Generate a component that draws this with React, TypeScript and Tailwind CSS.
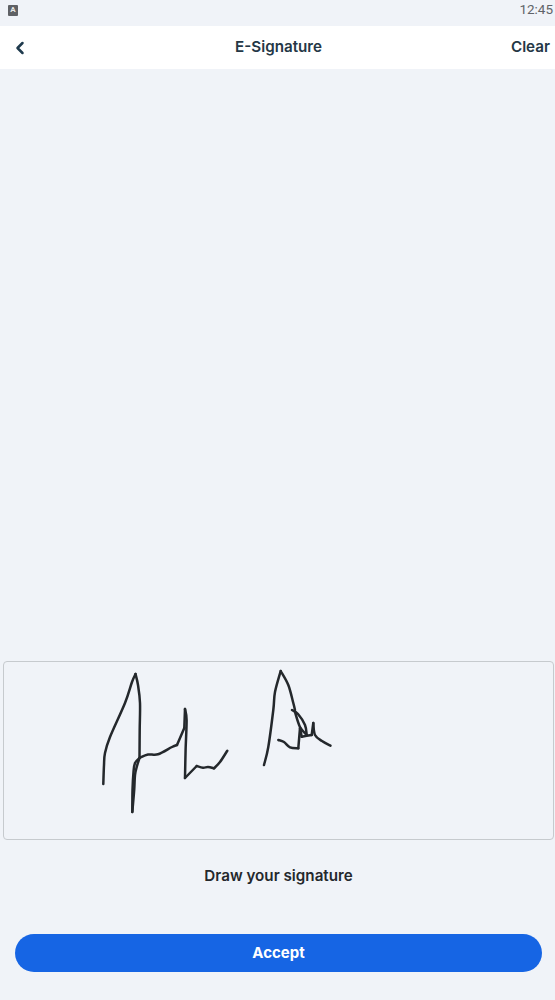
import { ChevronLeft } from 'lucide-react';

type Pt = [number, number];

// smooth line through the sampled pen points
function smooth(pts: Pt[]) {
  let d = `M${pts[0][0]} ${pts[0][1]}`;
  for (let i = 0; i < pts.length - 1; i++) {
    const p0 = pts[Math.max(i - 1, 0)];
    const p1 = pts[i];
    const p2 = pts[i + 1];
    const p3 = pts[Math.min(i + 2, pts.length - 1)];
    const c1x = p1[0] + (p2[0] - p0[0]) / 6;
    const c1y = p1[1] + (p2[1] - p0[1]) / 6;
    const c2x = p2[0] - (p3[0] - p1[0]) / 6;
    const c2y = p2[1] - (p3[1] - p1[1]) / 6;
    d += ` C${c1x} ${c1y} ${c2x} ${c2y} ${p2[0]} ${p2[1]}`;
  }
  return d;
}

// split at the sharp corners so the curve doesn't overshoot there
const strokes: Pt[][] = [
  [[103.3, 784], [104, 765], [105, 753], [110, 737], [125, 703], [132, 682], [135.5, 674]],
  [[135.5, 674], [138, 685], [140, 703], [139.7, 730], [139.5, 758]],
  [[139.5, 758], [135, 763], [133.5, 772], [132.5, 790], [132.3, 812]],
  [[132.3, 812], [134.2, 790], [135, 775], [137, 766], [139.5, 758]],
  [[139.5, 758], [148, 754.5], [158, 754.3], [172, 747], [177, 745]],
  [[177, 745], [184.3, 728]],
  [[184.3, 728], [185, 709]],
  [[185, 709], [186.6, 720], [185.6, 750], [185, 778]],
  [[185, 778], [196.7, 766]],
  [[196.7, 766], [203, 767.7], [208, 767], [214, 768.3]],
  [[214, 768.3], [220, 762], [227.3, 750.7]],
  [[264, 765], [268.3, 747], [273.3, 710], [275, 692], [280.7, 671]],
  [[280.7, 671], [288.3, 685], [293.3, 703], [295, 710]],
  [[292, 710], [298, 714], [305, 725], [306.7, 735]],
  [[306.7, 735], [300, 727], [295, 712]],
  [[278.3, 740], [284, 742], [290, 747.3], [298.3, 748.3]],
  [[298.3, 748.3], [300, 728]],
  [[300, 728], [301.7, 736.7]],
  [[301.7, 736.7], [311.7, 735]],
  [[311.7, 735], [313.3, 723]],
  [[313.3, 723], [315, 735], [322, 741], [330.5, 745.7]],
];

export default function App() {
  return (
    <div className="flex h-[1000px] w-full flex-col bg-[#f0f3f8] font-['Inter',sans-serif]">
      {/* Status bar */}
      <div className="flex h-[26px] items-center justify-between pb-[6px] pl-2 pr-[2px]">
        <div className="flex h-[11px] w-[10px] items-center justify-center rounded-[1px] bg-[#5f6165] font-['Roboto',sans-serif] text-[8px] font-bold leading-none text-[#e8e8e8]">
          A
        </div>
        <span className="font-['Roboto',sans-serif] text-[13.5px] leading-none text-[#5f6368]">12:45</span>
      </div>

      {/* Header */}
      <header className="relative flex h-[43px] items-center justify-between bg-white pl-[10px] pr-[5px]">
        <ChevronLeft className="h-[20px] w-[20px] text-[#1f3a4d]" strokeWidth={3} />
        <h1 className="absolute left-[2px] right-0 text-center text-[15.2px] font-semibold text-[#243746]">E-Signature</h1>
        <button className="text-[15.2px] font-semibold text-[#243746]">Clear</button>
      </header>

      <div className="flex-1" />

      {/* Signature pad */}
      <div className="pl-[3px] pr-px">
        <div className="h-[179px] rounded-[4px] border border-[#c6cace]">
          <svg
            viewBox="4 662 549 177"
            className="h-full w-full"
            fill="none"
            stroke="#24282c"
            strokeWidth="2.5"
            strokeLinecap="round"
            strokeLinejoin="round"
          >
            {strokes.map((s, i) => (
              <path key={i} d={smooth(s)} />
            ))}
          </svg>
        </div>
      </div>

      <p className="mt-[26px] pl-[2px] text-center text-[15.2px] leading-[20px] font-semibold text-[#24282c]">Draw your signature</p>

      {/* Accept */}
      <div className="mb-7 mt-[48px] pl-[15px] pr-[13px]">
        <button className="h-[38px] w-full rounded-full bg-[#1665e4] text-[15px] font-bold text-white">Accept</button>
      </div>
    </div>
  );
}
